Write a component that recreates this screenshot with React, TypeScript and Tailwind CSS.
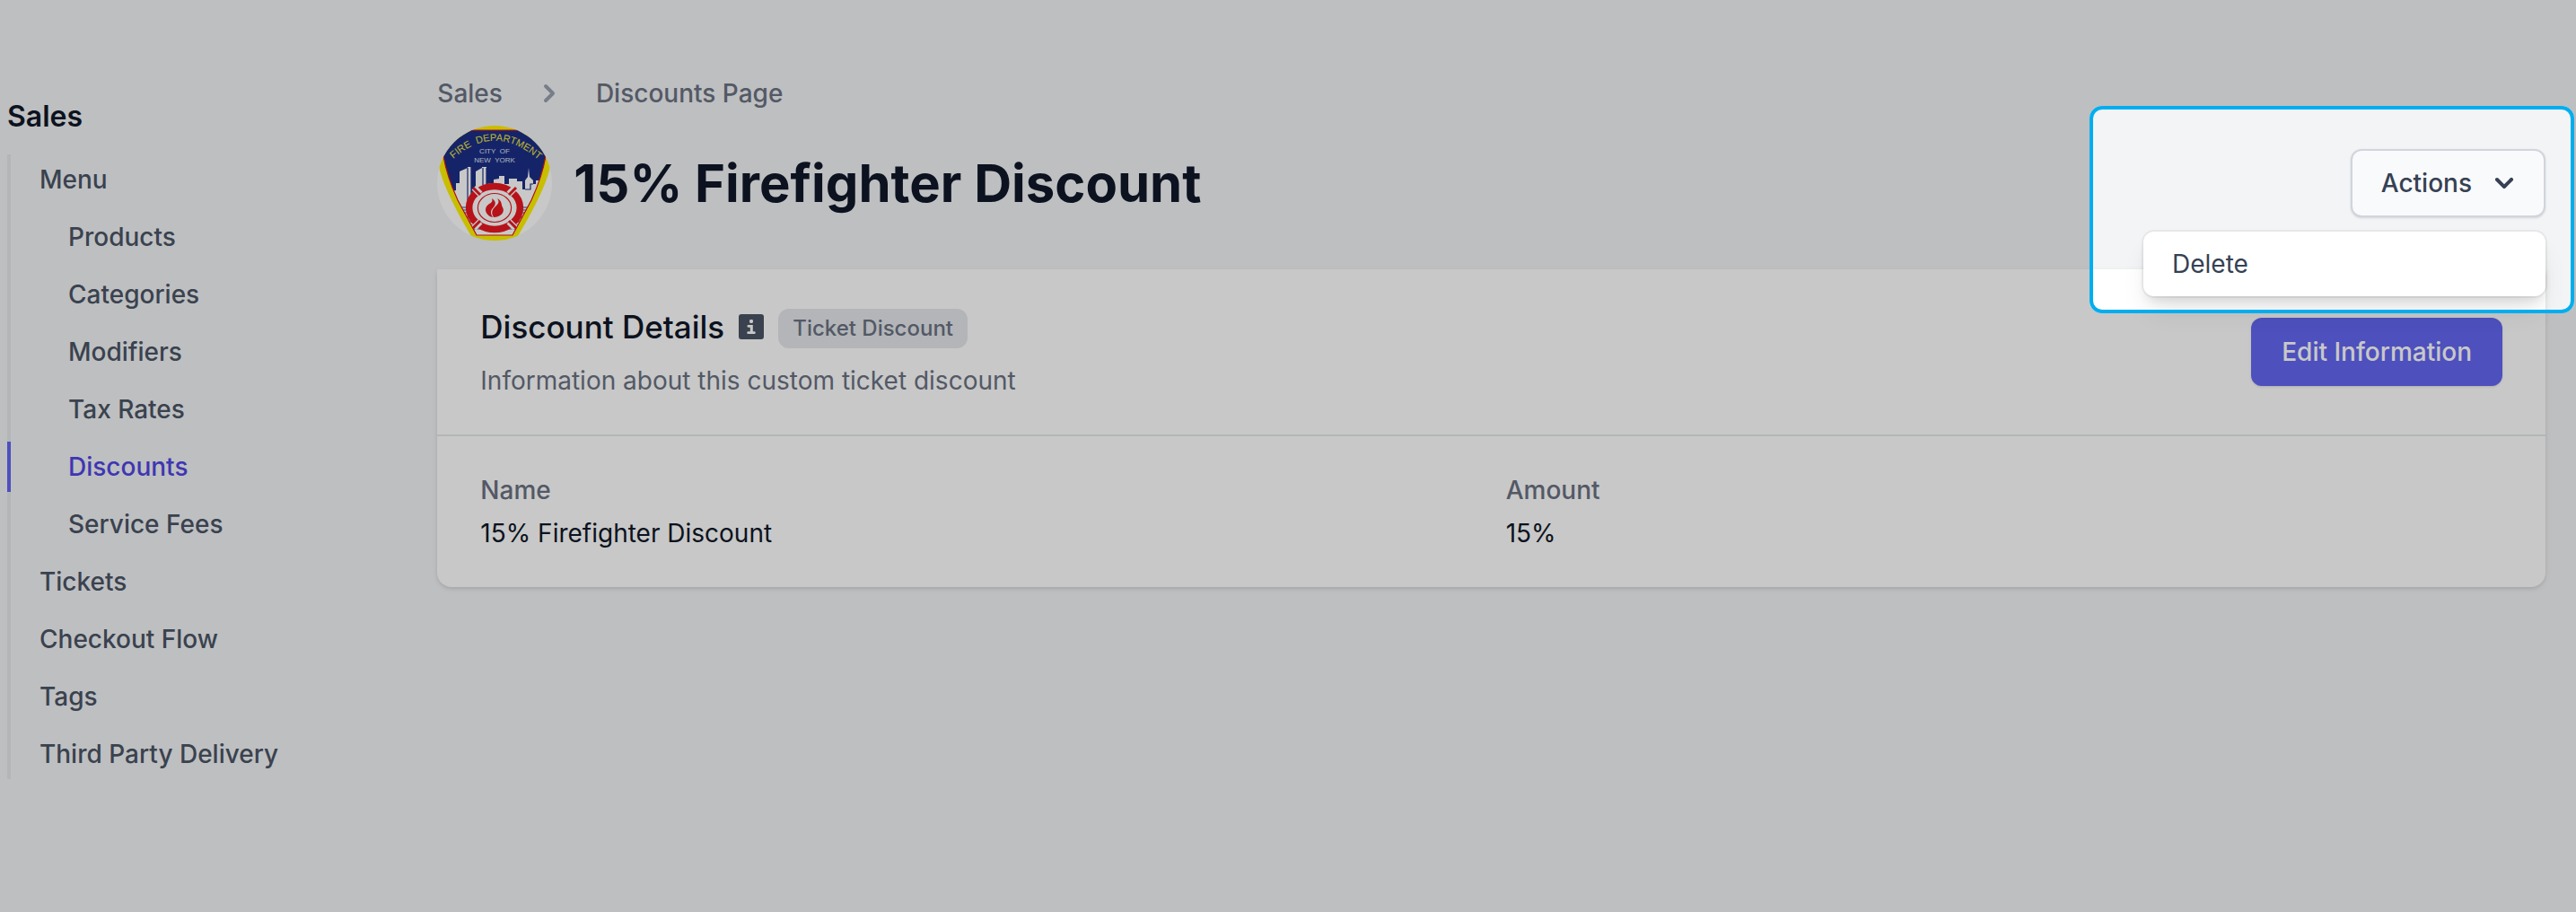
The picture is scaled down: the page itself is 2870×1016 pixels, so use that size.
import React, { useState } from "react";

interface NavItem {
  name: string;
  nested?: boolean;
  current?: boolean;
}

const navigation: NavItem[] = [
  { name: "Menu" },
  { name: "Products", nested: true },
  { name: "Categories", nested: true },
  { name: "Modifiers", nested: true },
  { name: "Tax Rates", nested: true },
  { name: "Discounts", nested: true, current: true },
  { name: "Service Fees", nested: true },
  { name: "Tickets" },
  { name: "Checkout Flow" },
  { name: "Tags" },
  { name: "Third Party Delivery" }
];

const discount = {
  name: "15% Firefighter Discount",
  amount: "15%"
};

function ChevronRight() {
  return (
    <svg className="size-10 text-gray-400" viewBox="0 0 20 20" fill="currentColor" aria-hidden="true">
      <path
        fillRule="evenodd"
        clipRule="evenodd"
        d="M7.293 14.707a1 1 0 010-1.414L10.586 10 7.293 6.707a1 1 0 011.414-1.414l4 4a1 1 0 010 1.414l-4 4a1 1 0 01-1.414 0z"
      />
    </svg>
  );
}

function ChevronDown() {
  return (
    <svg className="size-10" viewBox="0 0 20 20" fill="currentColor" aria-hidden="true">
      <path
        fillRule="evenodd"
        clipRule="evenodd"
        d="M5.293 7.293a1 1 0 011.414 0L10 10.586l3.293-3.293a1 1 0 111.414 1.414l-4 4a1 1 0 01-1.414 0l-4-4a1 1 0 010-1.414z"
      />
    </svg>
  );
}

function InfoIcon() {
  return (
    <svg className="size-7" viewBox="0 0 28 28" aria-hidden="true">
      <rect width="28" height="28" rx="3" className="fill-gray-600" />
      <rect x="12" y="6" width="4" height="4" rx="1.4" fill="#fff" />
      <path d="M10.8 12h5v7.3h1.6a1.3 1.3 0 010 2.7h-6.8a1.3 1.3 0 010-2.7h2.2v-4.6h-2a1.3 1.3 0 010-2.7z" fill="#fff" />
    </svg>
  );
}

function Badge() {
  return (
    <svg className="size-32 shrink-0" viewBox="0 0 128 128" role="img" aria-label="Fire department badge">
      <defs>
        <clipPath id="badge-circle">
          <circle cx="64" cy="64" r="64" />
        </clipPath>
        <clipPath id="badge-shield">
          <path d="M38 5H90L121 34Q117 57 105 83L84 122H44L23 83Q11 57 7 34Z" />
        </clipPath>
        <path id="badge-arc" d="M18 37Q64 -4 113 38" />
      </defs>
      <g clipPath="url(#badge-circle)">
        <rect width="128" height="128" fill="#fff" />
        <path d="M0 0H128V36L125 50Q118 76 90 123L84 128H44L38 123Q10 76 3 50L0 36Z" fill="#fff200" />
        <path d="M38 5H90L128 28L121 34Q117 57 105 83L84 122H44L23 83Q11 57 7 34L0 28Z" fill="#1c2f86" />
        <g clipPath="url(#badge-shield)">
          <path
            d="M0 79H17V73L21 72V64H25V51L34 47V46H38V86H43V51L50 47V46H55V73H63V60L69 59V56H75V65H80V59H89V62H95V71H98V61L101 57L102 47L103 57L107 61V65H110V61H128V128H0Z"
            fill="#fff"
          />
          <path
            d="M34 47V84M38 46V92M51 47V78M55 47V80M98 71H104V65H107"
            fill="none"
            stroke="#1c2f86"
            strokeWidth="1.2"
          />
          <path
            d="M24 91H104M27 94H102M29 97H99M32 102H98M34 107H95M37 111H92M39 115H89"
            stroke="#3a4b97"
            strokeWidth="1"
          />
        </g>
        <path
          d="M7 34Q11 57 23 83L44 122H84L105 83Q117 57 121 34M36 5H92"
          fill="none"
          stroke="#e8141c"
          strokeWidth="1.2"
        />
        <ellipse cx="64" cy="91.5" rx="32" ry="27.5" fill="#fff" />
        <ellipse cx="64" cy="91.5" rx="28.4" ry="24" fill="none" stroke="#ea1820" strokeWidth="7.6" />
        <path d="M41 69L48 76M87 69L80 76M41 114L48 107M87 114L80 107" stroke="#fff" strokeWidth="7" />
        <path d="M40 69L48 77M88 69L80 77M40 114L48 106M88 114L80 106" stroke="#ea1820" strokeWidth="3" />
        <ellipse cx="64" cy="91.5" rx="18.6" ry="16" fill="#fff" stroke="#ea1820" strokeWidth="1.2" />
        <path
          d="M62 102C56 101 52 95 55 90C58 86 63 86 61 81C67 85 65 89 61 93C59 96 60 99 62 102Z"
          fill="#ea1820"
        />
        <path
          d="M63 102C60 97 61 94 65 90C68 87 70 85 67 81C73 84 71 88 73 91C76 96 71 102 63 102Z"
          fill="#ea1820"
        />
        <text fontFamily="Liberation Sans, sans-serif" fontSize="11" fill="#efe63c">
          <textPath href="#badge-arc" startOffset="50%" textAnchor="middle">
            FIRE&nbsp; DEPARTMENT
          </textPath>
        </text>
        <g fontFamily="Liberation Sans, sans-serif" fontSize="8" fill="#dfe3f3" textAnchor="middle">
          <text x="64" y="31">CITY&nbsp; OF</text>
          <text x="64" y="41">NEW&nbsp; YORK</text>
        </g>
      </g>
    </svg>
  );
}

function Sidebar() {
  return (
    <aside className="col-span-2 pt-5.5">
      <h2 className="text-[32px] leading-12 font-semibold text-gray-900">Sales</h2>
      <nav className="mt-4.5" aria-label="Sales">
        <ul className="space-y-2 border-l-4 border-gray-200">
          {navigation.map((item) => (
            <li key={item.name}>
              <a
                href="#"
                aria-current={item.current ? "page" : undefined}
                className={`-ml-1 block border-l-4 py-2 text-[28px] leading-10 font-medium ${
                  item.nested ? "pl-16" : "pl-8"
                } ${item.current ? "border-[#6366f1] text-[#4f46e5]" : "border-transparent text-gray-600"}`}
              >
                {item.name}
              </a>
            </li>
          ))}
        </ul>
      </nav>
    </aside>
  );
}

function ActionsMenu() {
  const [open, setOpen] = useState(true);

  return (
    <div className="relative">
      <button
        type="button"
        aria-expanded={open}
        onClick={() => setOpen(!open)}
        className="flex items-center gap-4 rounded-xl border-2 border-gray-300 bg-gray-50 py-4 pr-6 pl-8 text-[28px] leading-10 font-medium text-gray-700 shadow-sm"
      >
        Actions
        <ChevronDown />
      </button>

      {open && (
        <div className="absolute top-full right-0 z-10 mt-4 w-112 rounded-xl bg-white py-2 shadow-[0_20px_30px_-6px_rgba(0,0,0,0.1),0_8px_12px_-4px_rgba(0,0,0,0.1)] ring-2 ring-black/5">
          <button type="button" className="block w-full px-8 py-2 text-left text-[28px] leading-10 text-gray-700">
            Delete
          </button>
        </div>
      )}

      {/* Spotlight over the menu, everything else is dimmed */}
      <div className="pointer-events-none absolute -top-12 -right-8 z-20 h-[231px] w-[540px] rounded-[14px] border-4 border-[#00aeef] shadow-[0_0_0_4000px_rgba(0,0,0,0.216)]" />
    </div>
  );
}

function App() {
  return (
    <div className="min-h-screen overflow-hidden bg-gray-100 pt-[84px] pr-[34px] pl-2 font-[Inter,sans-serif]">
      <div className="grid grid-cols-12 gap-x-12">
        <Sidebar />

        <main className="col-span-10">
          {/* Breadcrumbs */}
          <nav className="flex items-center gap-8 text-[28px] leading-10 font-medium text-gray-500" aria-label="Breadcrumb">
            <a href="#">Sales</a>
            <ChevronRight />
            <a href="#">Discounts Page</a>
          </nav>

          {/* Page heading */}
          <div className="mt-4 flex items-center justify-between">
            <div className="flex items-center gap-6">
              <Badge />
              <h1 className="text-[58px] leading-none font-bold text-gray-900">{discount.name}</h1>
            </div>
            <ActionsMenu />
          </div>

          {/* Details */}
          <section className="mt-8 rounded-b-2xl bg-white shadow-[0_2px_6px_rgba(0,0,0,0.1),0_2px_4px_-2px_rgba(0,0,0,0.1)]">
            <div className="flex items-center justify-between border-b-2 border-gray-200 px-12 py-10">
              <div>
                <div className="flex h-12 items-center gap-4">
                  <h2 className="text-[35px] leading-12 font-medium text-gray-900">Discount Details</h2>
                  <InfoIcon />
                  <span className="self-end rounded-xl bg-gray-200 px-4 py-1 text-2xl leading-9 font-medium text-gray-500">
                    Ticket Discount
                  </span>
                </div>
                <p className="mt-4 text-[28px] leading-10 text-gray-500">
                  Information about this custom ticket discount
                </p>
              </div>
              <button
                type="button"
                className="rounded-xl border-2 border-transparent bg-[#6366f1] px-8 py-4 text-[28px] leading-10 font-medium text-white shadow-sm"
              >
                Edit Information
              </button>
            </div>
            <dl className="grid grid-cols-2 gap-x-8 px-12 py-10 text-[28px] leading-10">
              <div>
                <dt className="font-medium text-gray-500">Name</dt>
                <dd className="mt-2 text-gray-900">{discount.name}</dd>
              </div>
              <div>
                <dt className="font-medium text-gray-500">Amount</dt>
                <dd className="mt-2 text-gray-900">{discount.amount}</dd>
              </div>
            </dl>
          </section>
        </main>
      </div>
    </div>
  );
}

export default App;
